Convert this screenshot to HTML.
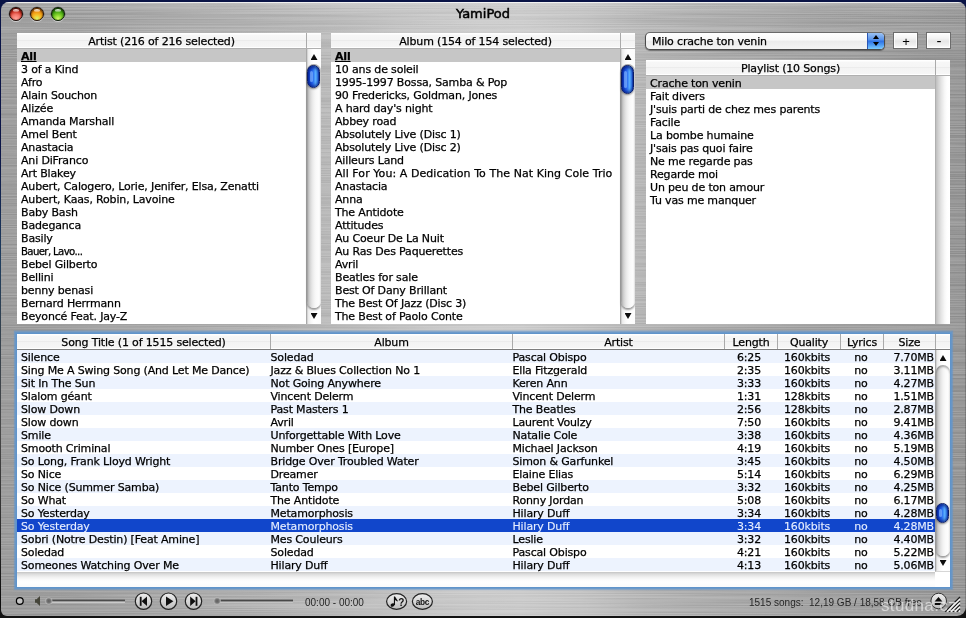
<!DOCTYPE html>
<html lang="en"><head><meta charset="utf-8"><title>YamiPod</title>
<style>
*{box-sizing:border-box;margin:0;padding:0}
html,body{width:966px;height:618px;overflow:hidden}
body{position:relative;background:linear-gradient(to bottom,#0a1446 0,#0a1446 150px,#1e3d5e 260px,#33414e 330px,#484848 430px,#2a2a2a 540px,#0c0c0c 600px,#0c0c0c 618px);font-family:"DejaVu Sans","Liberation Sans",sans-serif;font-size:11px;letter-spacing:-.16px;-webkit-text-stroke:.25px #000;color:#000;line-height:13px}
#topbg{position:absolute;left:0;top:0;width:966px;height:10px;background:#0a1446}
#botbg{position:absolute;left:0;top:608px;width:966px;height:10px;background:#121212}
#win{position:absolute;left:1px;top:2px;width:965px;height:614px;border-radius:8px 8px 9px 6px;overflow:hidden;
background:linear-gradient(to bottom,rgba(255,255,255,.16) 0,rgba(255,255,255,.04) 10px,rgba(255,255,255,0) 18px,rgba(255,255,255,.07) 29px,rgba(255,255,255,0) 40px),linear-gradient(to right,#9d9d9d 0,#a0a0a0 80px,#a8a8a8 160px,#b0b0b0 240px,#b9b9b9 322px,#c3c3c3 400px,#cbcbcb 480px,#cccccc 520px,#c4c4c4 580px,#b6b6b6 644px,#acacac 720px,#a4a4a4 800px,#9e9e9e 880px,#979797 965px)}
#win:before{content:"";position:absolute;left:0;top:0;right:0;height:1px;background:rgba(255,255,255,.75);z-index:2}
#win:after{content:"";position:absolute;right:0;top:0;bottom:0;width:1px;background:rgba(0,0,0,.18);z-index:2}
#tex{position:absolute;left:0;top:0;width:965px;height:614px;opacity:.11;mix-blend-mode:overlay}
#title{position:absolute;left:0;top:6px;letter-spacing:0;-webkit-text-stroke:.5px #000;width:966px;text-align:center;font-size:13px;line-height:15px;color:#000}
.tl{position:absolute;top:7px;width:14px;height:14px;border-radius:50%;border:1px solid #1c0a06;box-shadow:0 1px 0 rgba(255,255,255,.6),0 0 0 .5px rgba(0,0,0,.35),inset 0 1px 2px rgba(0,0,0,.65)}
.tl:after{content:"";position:absolute;left:3px;top:.5px;width:6px;height:3px;border-radius:50%;background:linear-gradient(rgba(255,255,255,.95),rgba(255,255,255,.25))}
#tl1{left:9px;background:radial-gradient(circle at 50% 88%,#ffa49a 0,#f4756a 34%,#c93022 62%,#8e150a 100%)}
#tl2{left:30px;background:radial-gradient(circle at 50% 88%,#d6f668 0,#f6c02a 30%,#ee9210 58%,#a84c06 100%);border-color:#241204}
#tl3{left:51px;background:radial-gradient(circle at 50% 88%,#d2f86a 0,#8ad830 28%,#46a612 58%,#1a5c06 100%);border-color:#081a04}

.panel{position:absolute;background:#fff;overflow:hidden}
.hd{position:relative;height:16px;border-bottom:1px solid #b0b0b0;background:linear-gradient(#fff 0,#fff 1px,#f7f7f7 2px,#f5f5f5 7px,#ececec 7px,#ececec 8px,#f3f3f3 8px,#f6f6f6 14px,#fff 14px,#fff 15px);white-space:nowrap;overflow:hidden;display:flex}
.hc{height:15px;line-height:15px;text-align:center;border-right:1px solid #aaa;flex:none;padding-top:1px}
.hs{flex:1;height:15px}
.rows{position:absolute;left:0;top:16px;right:14px}
.r{height:13px;line-height:13px;padding:1px 0 0 4px;white-space:nowrap}
.r.sel{background:#c6c6c6}
.r.all{font-weight:bold;text-decoration:underline}
.r.wide{letter-spacing:.06px}
.r.nar{letter-spacing:-.65px;font-size:10.2px}
.sb{position:absolute;right:0;top:16px;width:15px;border-left:1px solid #a9a9a9;background:linear-gradient(to right,#c8c8c8 0,#ececec 1.5px,#f8f8f8 4px,#fff 7px,#fcfcfc 14px)}
.sb.empty{border-left-color:#b0b0b0;background:linear-gradient(to right,#bebebe 0,#d2d2d2 2.5px,#e6e6e6 5.5px,#f6f6f6 8.5px,#fefefe 11px,#fff 14px)}
.trk{position:absolute;left:0;top:15px;width:100%;border-radius:7px;background:linear-gradient(to right,#aaa 0,#bcbcbc 1px,#cecece 2.5px,#dedede 4px,#e9e9e9 5.5px,#f2f2f2 7px,#f9f9f9 9px,#fdfdfd 12px,#f8f8f8 14px);box-shadow:inset 0 2px 2px rgba(0,0,0,.3),0 2px 2px rgba(0,0,0,.4);z-index:1}
.sb .au,.sb .ad{position:absolute;left:3.5px;width:7px;height:6px;background:#0c0c0c;z-index:2}
.sb .au{top:5px;clip-path:polygon(50% 0,100% 100%,0 100%)}
.sb .ad{bottom:5px;clip-path:polygon(0 0,100% 0,50% 100%)}

.th{position:absolute;left:0;width:13px;border-radius:6.5px;z-index:3;border:1px solid #0a1c66;background:linear-gradient(to right,#0a36bc 0,#164cd8 18%,#2a6cf0 45%,#5ab2ff 70%,#3c8cf6 86%,#184cd0 100%);box-shadow:0 1px 2px rgba(0,0,0,.45),inset 0 2px 3px rgba(6,24,120,.75),inset 0 -2px 3px rgba(6,24,120,.6)}
.th b{position:absolute;left:2px;top:5px;bottom:5px;width:2.5px;border-radius:1.5px;background:rgba(140,190,255,.6)}

#ring{position:absolute;left:17px;top:334px;width:933px;height:253px;background:#6094ca;box-shadow:0 0 0 1px #6094ca,0 0 0 2px rgba(98,150,204,.72),0 0 0 3px rgba(98,150,204,.42),0 -1px 0 3px rgba(98,150,204,.22),0 0 0 3.6px rgba(98,150,204,.14)}
#tbl{position:absolute;left:17px;top:334px;width:933px;height:253px;background:#fff;overflow:hidden}
#tbl .hd{border-bottom:1px solid #7e7e7e}
.trs{position:absolute;left:0;top:16px;width:919px}
.trs{background:repeating-linear-gradient(#edf3fe 0,#edf3fe 13px,#fff 13px,#fff 26px);height:221px}
.trs:before{content:"";position:absolute;left:0;right:0;top:169px;height:13px;background:#1146cb}
.tr{position:relative;height:13px;line-height:13px;white-space:nowrap;display:flex;padding-top:1px}
.tr.hi{color:#e6eeff;-webkit-text-stroke:.12px #e6eeff}
.c{display:block;flex:none;padding-left:4px;height:13px}
.c1,.c2{padding-left:0;text-indent:-.5px}
.c3,.c5{text-align:center;padding-left:0}
.c3{padding-right:5px}
.c5{padding-right:3px}
.c4{padding-left:6px}
.c6{text-align:right;padding-right:2px}
.tsb{top:16px;border-bottom:1px solid #d6d6d6}
.hsb{position:absolute;left:0;right:15px;top:238px;height:15px;background:linear-gradient(#c4c4c4 0,#dcdcdc 2px,#f0f0f0 5px,#fcfcfc 8px,#fff 10px,#fbfbfb 15px)}

#bar{position:absolute;left:0;top:0;width:966px;height:618px;pointer-events:none}
.txt{position:absolute;font-family:"Liberation Sans",sans-serif;font-size:10px;line-height:12px;color:#262626;white-space:pre;letter-spacing:0;-webkit-text-stroke:0}
#wm{position:absolute;left:881px;top:596px;font-family:"Liberation Sans",sans-serif;font-size:17px;line-height:20px;color:rgba(236,236,236,.7);letter-spacing:.35px;-webkit-text-stroke:0;white-space:nowrap}
#combo{position:absolute;left:645px;top:32px;width:240px;height:18px;border-radius:5px;border:1px solid #4a4a4a;border-top-color:#6a6a6a;background:linear-gradient(#fff 0,#f8f8f8 45%,#ebebeb 50%,#f4f4f4 100%);box-shadow:0 1px 1px rgba(0,0,0,.4);overflow:hidden}
#combo span{position:absolute;left:6px;top:2px;line-height:13px}
#combo i{position:absolute;right:0;top:0;width:17px;height:16px;background:linear-gradient(#9cc2f2 0,#5c96ec 40%,#2f72e4 52%,#4f9cf4 75%,#7cccff 100%);border-left:1px solid #2a56b4}
#combo i:before,#combo i:after{content:"";position:absolute;left:4.5px;border-left:3px solid transparent;border-right:3px solid transparent}
#combo i:before{top:2px;border-bottom:4px solid #000}
#combo i:after{top:9px;border-top:4px solid #000}
.pbtn{position:absolute;top:32px;width:25px;height:17px;border:1px solid #6c6c6c;background:linear-gradient(#fff 0,#f3f3f3 35%,#e6e6e6 55%,#f2f2f2 85%,#fff 100%);text-align:center;line-height:16px;font-family:"Liberation Sans",sans-serif;font-size:11px;letter-spacing:0;-webkit-text-stroke:0;box-shadow:inset 0 0 0 1px rgba(255,255,255,.8)}

</style></head>
<body>
<div id="topbg"></div><div id="botbg"></div>
<div id="win">
<svg id="tex" width="965" height="614" viewBox="0 0 965 614" preserveAspectRatio="none"><defs><filter id="bm" x="0" y="0" width="100%" height="100%" color-interpolation-filters="sRGB"><feTurbulence type="fractalNoise" baseFrequency="0.005 0.9" numOctaves="2" seed="11" result="n"/><feColorMatrix type="matrix" values="2.6 0 0 0 -0.8  2.6 0 0 0 -0.8  2.6 0 0 0 -0.8  0 0 0 0 1"/></filter></defs><rect width="965" height="614" filter="url(#bm)"/></svg>
</div>
<div id="title">YamiPod</div>
<div class="tl" id="tl1"></div><div class="tl" id="tl2"></div><div class="tl" id="tl3"></div>
<div class="panel" id="artist" style="left:17px;top:33px;width:304px;height:291px"><div class="hd"><div class="hc" style="width:290px">Artist (216 of 216 selected)</div><div class="hs"></div></div><div class="rows"><div class="r sel all">All</div><div class="r">3 of a Kind</div><div class="r">Afro</div><div class="r">Alain Souchon</div><div class="r">Alizée</div><div class="r">Amanda Marshall</div><div class="r">Amel Bent</div><div class="r">Anastacia</div><div class="r">Ani DiFranco</div><div class="r">Art Blakey</div><div class="r">Aubert, Calogero, Lorie, Jenifer, Elsa, Zenatti</div><div class="r">Aubert, Kaas, Robin, Lavoine</div><div class="r">Baby Bash</div><div class="r">Badeganca</div><div class="r">Basily</div><div class="r nar">Bauer, Lavo...</div><div class="r">Bebel Gilberto</div><div class="r">Bellini</div><div class="r">benny benasi</div><div class="r">Bernard Herrmann</div><div class="r">Beyoncé Feat. Jay-Z</div></div><div class="sb " style="height:275px"><div class="trk" style="height:244px"></div><i class="au"></i><i class="ad"></i><div class="th" style="top:16px;height:23px"><b></b></div></div></div>
<div class="panel" id="album" style="left:331px;top:33px;width:304px;height:291px"><div class="hd"><div class="hc" style="width:290px">Album (154 of 154 selected)</div><div class="hs"></div></div><div class="rows"><div class="r sel all">All</div><div class="r">10 ans de soleil</div><div class="r">1995-1997 Bossa, Samba &amp; Pop</div><div class="r">90 Fredericks, Goldman, Jones</div><div class="r">A hard day's night</div><div class="r">Abbey road</div><div class="r">Absolutely Live (Disc 1)</div><div class="r">Absolutely Live (Disc 2)</div><div class="r">Ailleurs Land</div><div class="r wide">All For You: A Dedication To The Nat King Cole Trio</div><div class="r">Anastacia</div><div class="r">Anna</div><div class="r">The Antidote</div><div class="r">Attitudes</div><div class="r">Au Coeur De La Nuit</div><div class="r">Au Ras Des Paquerettes</div><div class="r">Avril</div><div class="r">Beatles for sale</div><div class="r">Best Of Dany Brillant</div><div class="r">The Best Of Jazz (Disc 3)</div><div class="r">The Best of Paolo Conte</div></div><div class="sb " style="height:275px"><div class="trk" style="height:244px"></div><i class="au"></i><i class="ad"></i><div class="th" style="top:16px;height:29px"><b></b></div></div></div>
<div class="panel" id="plist" style="left:646px;top:60px;width:304px;height:264px"><div class="hd"><div class="hc" style="width:290px">Playlist (10 Songs)</div><div class="hs"></div></div><div class="rows"><div class="r sel">Crache ton venin</div><div class="r">Fait divers</div><div class="r">J'suis parti de chez mes parents</div><div class="r">Facile</div><div class="r">La bombe humaine</div><div class="r">J'sais pas quoi faire</div><div class="r">Ne me regarde pas</div><div class="r">Regarde moi</div><div class="r">Un peu de ton amour</div><div class="r">Tu vas me manquer</div></div><div class="sb empty" style="height:248px"></div></div>
<div id="ring"></div><div id="tbl"><div class="hd"><div class="hc" style="width:254px">Song Title (1 of 1515 selected)</div><div class="hc" style="width:242px">Album</div><div class="hc" style="width:212px">Artist</div><div class="hc" style="width:53px">Length</div><div class="hc" style="width:63px">Quality</div><div class="hc" style="width:43px">Lyrics</div><div class="hc" style="width:52px">Size</div><div class="hs"></div></div><div class="trs"><div class="tr alt"><span class="c c0" style="width:254px">Silence</span><span class="c c1" style="width:242px">Soledad</span><span class="c c2" style="width:212px">Pascal Obispo</span><span class="c c3" style="width:53px">6:25</span><span class="c c4" style="width:63px">160kbits</span><span class="c c5" style="width:43px">no</span><span class="c c6" style="width:52px">7.70MB</span></div><div class="tr"><span class="c c0" style="width:254px">Sing Me A Swing Song (And Let Me Dance)</span><span class="c c1" style="width:242px">Jazz &amp; Blues Collection No 1</span><span class="c c2" style="width:212px">Ella Fitzgerald</span><span class="c c3" style="width:53px">2:35</span><span class="c c4" style="width:63px">160kbits</span><span class="c c5" style="width:43px">no</span><span class="c c6" style="width:52px">3.11MB</span></div><div class="tr alt"><span class="c c0" style="width:254px">Sit In The Sun</span><span class="c c1" style="width:242px">Not Going Anywhere</span><span class="c c2" style="width:212px">Keren Ann</span><span class="c c3" style="width:53px">3:33</span><span class="c c4" style="width:63px">160kbits</span><span class="c c5" style="width:43px">no</span><span class="c c6" style="width:52px">4.27MB</span></div><div class="tr"><span class="c c0" style="width:254px">Slalom géant</span><span class="c c1" style="width:242px">Vincent Delerm</span><span class="c c2" style="width:212px">Vincent Delerm</span><span class="c c3" style="width:53px">1:31</span><span class="c c4" style="width:63px">128kbits</span><span class="c c5" style="width:43px">no</span><span class="c c6" style="width:52px">1.51MB</span></div><div class="tr alt"><span class="c c0" style="width:254px">Slow Down</span><span class="c c1" style="width:242px">Past Masters 1</span><span class="c c2" style="width:212px">The Beatles</span><span class="c c3" style="width:53px">2:56</span><span class="c c4" style="width:63px">128kbits</span><span class="c c5" style="width:43px">no</span><span class="c c6" style="width:52px">2.87MB</span></div><div class="tr"><span class="c c0" style="width:254px">Slow down</span><span class="c c1" style="width:242px">Avril</span><span class="c c2" style="width:212px">Laurent Voulzy</span><span class="c c3" style="width:53px">7:50</span><span class="c c4" style="width:63px">160kbits</span><span class="c c5" style="width:43px">no</span><span class="c c6" style="width:52px">9.41MB</span></div><div class="tr alt"><span class="c c0" style="width:254px">Smile</span><span class="c c1" style="width:242px">Unforgettable With Love</span><span class="c c2" style="width:212px">Natalie Cole</span><span class="c c3" style="width:53px">3:38</span><span class="c c4" style="width:63px">160kbits</span><span class="c c5" style="width:43px">no</span><span class="c c6" style="width:52px">4.36MB</span></div><div class="tr"><span class="c c0" style="width:254px">Smooth Criminal</span><span class="c c1" style="width:242px">Number Ones [Europe]</span><span class="c c2" style="width:212px">Michael Jackson</span><span class="c c3" style="width:53px">4:19</span><span class="c c4" style="width:63px">160kbits</span><span class="c c5" style="width:43px">no</span><span class="c c6" style="width:52px">5.19MB</span></div><div class="tr alt"><span class="c c0" style="width:254px">So Long, Frank Lloyd Wright</span><span class="c c1" style="width:242px">Bridge Over Troubled Water</span><span class="c c2" style="width:212px">Simon &amp; Garfunkel</span><span class="c c3" style="width:53px">3:45</span><span class="c c4" style="width:63px">160kbits</span><span class="c c5" style="width:43px">no</span><span class="c c6" style="width:52px">4.50MB</span></div><div class="tr"><span class="c c0" style="width:254px">So Nice</span><span class="c c1" style="width:242px">Dreamer</span><span class="c c2" style="width:212px">Elaine Elias</span><span class="c c3" style="width:53px">5:14</span><span class="c c4" style="width:63px">160kbits</span><span class="c c5" style="width:43px">no</span><span class="c c6" style="width:52px">6.29MB</span></div><div class="tr alt"><span class="c c0" style="width:254px">So Nice (Summer Samba)</span><span class="c c1" style="width:242px">Tanto Tempo</span><span class="c c2" style="width:212px">Bebel Gilberto</span><span class="c c3" style="width:53px">3:32</span><span class="c c4" style="width:63px">160kbits</span><span class="c c5" style="width:43px">no</span><span class="c c6" style="width:52px">4.25MB</span></div><div class="tr"><span class="c c0" style="width:254px">So What</span><span class="c c1" style="width:242px">The Antidote</span><span class="c c2" style="width:212px">Ronny Jordan</span><span class="c c3" style="width:53px">5:08</span><span class="c c4" style="width:63px">160kbits</span><span class="c c5" style="width:43px">no</span><span class="c c6" style="width:52px">6.17MB</span></div><div class="tr alt"><span class="c c0" style="width:254px">So Yesterday</span><span class="c c1" style="width:242px">Metamorphosis</span><span class="c c2" style="width:212px">Hilary Duff</span><span class="c c3" style="width:53px">3:34</span><span class="c c4" style="width:63px">160kbits</span><span class="c c5" style="width:43px">no</span><span class="c c6" style="width:52px">4.28MB</span></div><div class="tr hi"><span class="c c0" style="width:254px">So Yesterday</span><span class="c c1" style="width:242px">Metamorphosis</span><span class="c c2" style="width:212px">Hilary Duff</span><span class="c c3" style="width:53px">3:34</span><span class="c c4" style="width:63px">160kbits</span><span class="c c5" style="width:43px">no</span><span class="c c6" style="width:52px">4.28MB</span></div><div class="tr alt"><span class="c c0" style="width:254px">Sobri (Notre Destin) [Feat Amine]</span><span class="c c1" style="width:242px">Mes Couleurs</span><span class="c c2" style="width:212px">Leslie</span><span class="c c3" style="width:53px">3:32</span><span class="c c4" style="width:63px">160kbits</span><span class="c c5" style="width:43px">no</span><span class="c c6" style="width:52px">4.40MB</span></div><div class="tr"><span class="c c0" style="width:254px">Soledad</span><span class="c c1" style="width:242px">Soledad</span><span class="c c2" style="width:212px">Pascal Obispo</span><span class="c c3" style="width:53px">4:21</span><span class="c c4" style="width:63px">160kbits</span><span class="c c5" style="width:43px">no</span><span class="c c6" style="width:52px">5.22MB</span></div><div class="tr alt"><span class="c c0" style="width:254px">Someones Watching Over Me</span><span class="c c1" style="width:242px">Hilary Duff</span><span class="c c2" style="width:212px">Hilary Duff</span><span class="c c3" style="width:53px">4:13</span><span class="c c4" style="width:63px">160kbits</span><span class="c c5" style="width:43px">no</span><span class="c c6" style="width:52px">5.06MB</span></div></div><div class="sb tsb" style="height:222px"><div class="trk" style="height:191px"></div><i class="au"></i><i class="ad"></i><div class="th" style="top:153px;height:20px"><b></b></div></div><div class="hsb"></div></div>
<svg id="bar" width="966" height="618" viewBox="0 0 966 618">
<defs>
<linearGradient id="bg1" x1="0" y1="0" x2="0" y2="1"><stop offset="0" stop-color="#eeeeee"/><stop offset=".55" stop-color="#d4d4d4"/><stop offset="1" stop-color="#bababa"/></linearGradient>
<radialGradient id="kn" cx=".5" cy=".5" r=".5"><stop offset="0" stop-color="#5e5e5e"/><stop offset=".55" stop-color="#767676"/><stop offset="1" stop-color="#bcbcbc"/></radialGradient>
</defs>
<circle cx="19.8" cy="601" r="3.4" fill="#c4c4c4" stroke="#000" stroke-width="1.25"/>
<path d="M35 599.2h1.6L40 596v10l-3.4-3.2H35z" fill="#45453a"/>
<rect x="49" y="599.6" width="76" height="2" fill="#4c4c4c"/><rect x="49" y="601.6" width="76" height="1" fill="#e6e6e6"/>
<circle cx="48.8" cy="601" r="3.6" fill="url(#kn)"/>
<g stroke="#222" stroke-width="1.2" fill="url(#bg1)"><circle cx="143.5" cy="601.2" r="8.2"/><circle cx="168.5" cy="601.2" r="8.2"/><circle cx="193.5" cy="601.2" r="8.2"/></g>
<g fill="#111"><rect x="139.8" y="596.8" width="1.8" height="9"/><path d="M147 596.6v9.4l-5.4-4.7z"/>
<path d="M166 596.6v9.4l7.4-4.7z"/>
<rect x="195.6" y="596.8" width="1.8" height="9"/><path d="M190.2 596.6v9.4l5.4-4.7z"/></g>
<rect x="217" y="599.6" width="76" height="2" fill="#484848"/><rect x="217" y="601.6" width="76" height="1" fill="#dcdcdc" opacity=".7"/>
<circle cx="217.2" cy="601" r="3.6" fill="url(#kn)"/>
<g stroke="#222" stroke-width="1.2" fill="url(#bg1)"><ellipse cx="396.6" cy="601.5" rx="10" ry="7.8"/><ellipse cx="422.4" cy="601.5" rx="10" ry="7.8"/></g>
<g fill="#0e0e0e"><ellipse cx="392.6" cy="605" rx="2.1" ry="1.6" transform="rotate(-25 392.6 605)"/><path d="M393.9 596.6h1.1l2.9 4.3-.5.7-2.4-1.6v4.9h-1.1z"/></g>
<g stroke="#333" stroke-width="1" fill="url(#bg1)"><circle cx="938.7" cy="601" r="7.8"/></g>
<path d="M934.6 601.6h7.8l-3.9-4.6z M934.8 602.9h7.4v2h-7.4z" fill="#0c0c0c"/>
<text x="401.3" y="606" font-family="Liberation Sans, sans-serif" font-size="10" font-weight="bold" text-anchor="middle" fill="#111">?</text>
<text x="422.4" y="604.8" font-family="Liberation Sans, sans-serif" font-size="8.3" font-weight="bold" text-anchor="middle" letter-spacing="-0.3" fill="#111">abc</text>
<g stroke-width="1.35"><path d="M945.2 611.8L960 597M949.1 611.8L960 600.9M953 611.8L960 604.8M956.9 611.8L960 608.7" stroke="#1e1e1e"/><path d="M947.1 611.8L960 598.9M951 611.8L960 602.8M954.9 611.8L960 606.7M958.8 611.8L960 610.6" stroke="#f4f4f4"/></g>
</svg>
<div class="txt" style="left:305px;top:597px">00:00 - 00:00</div>
<div class="txt" style="left:749px;top:597px">1515 songs:  12,19 GB / 18,58 GB free</div>
<div id="wm">studna.cz</div>
<div id="combo"><span>Milo crache ton venin</span><i></i></div>
<div class="pbtn" style="left:893px;font-size:13px;line-height:17px;padding-left:1px">+</div><div class="pbtn" style="left:926px;font-size:15px;line-height:16px;padding-left:1px">-</div>
</body></html>
